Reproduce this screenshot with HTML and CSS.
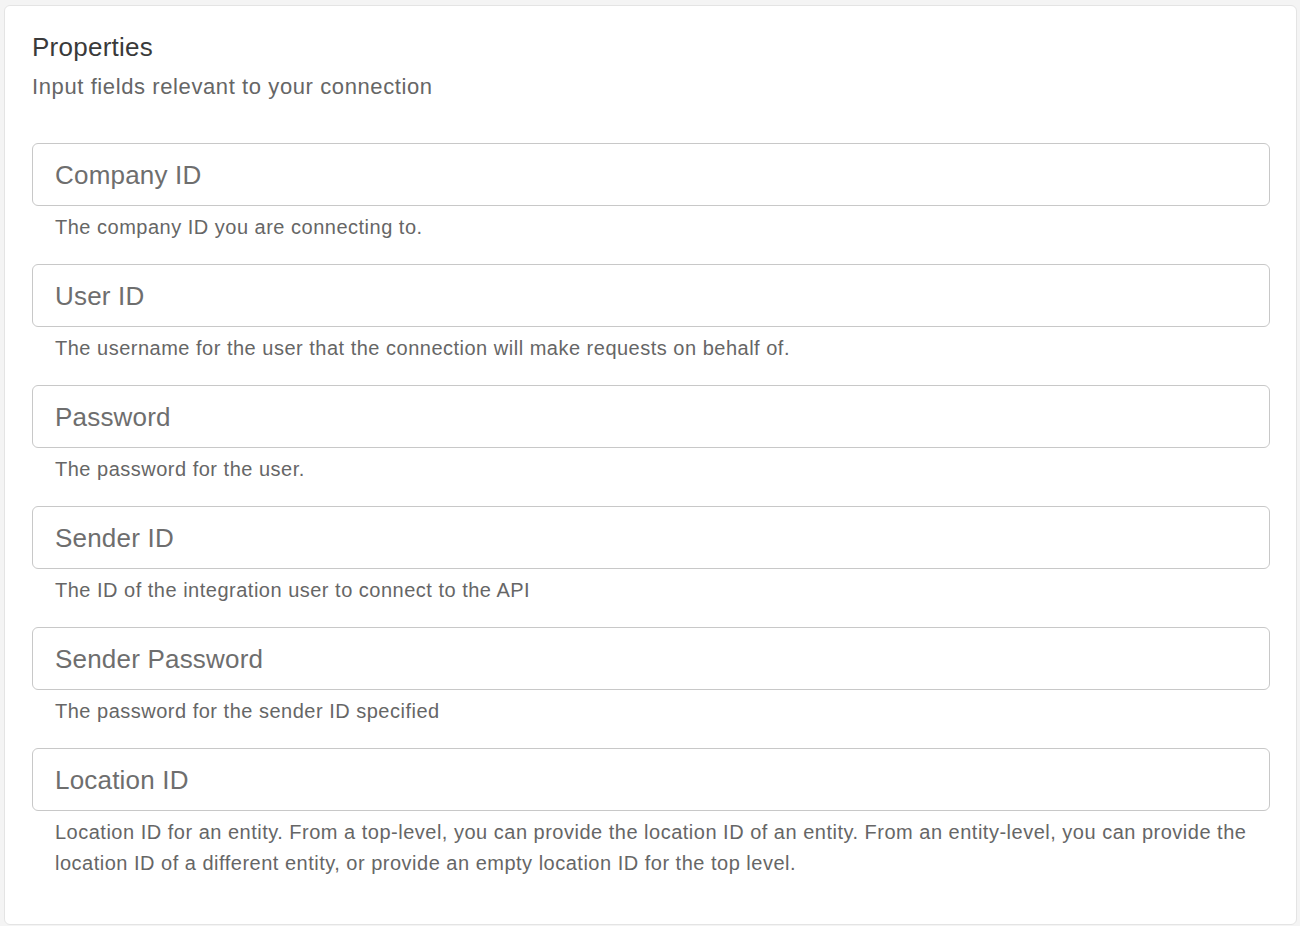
FILE: index.html
```html
<!DOCTYPE html>
<html lang="en">
<head>
  <meta charset="UTF-8">
  <meta name="viewport" content="width=device-width, initial-scale=1.0">
  <title>Connection properties</title>
  <link rel="stylesheet" href="styles.css">
</head>
<body>
  <div class="card">
    <div class="card-title">Properties</div>
    <div class="card-subtitle">Input fields relevant to your connection</div>

    <div class="fields">
      <div class="field">
        <input type="text" class="field-input" placeholder="Company ID">
        <div class="field-help">The company ID you are connecting to.</div>
      </div>
      <div class="field">
        <input type="text" class="field-input" placeholder="User ID">
        <div class="field-help">The username for the user that the connection will make requests on behalf of.</div>
      </div>
      <div class="field">
        <input type="password" class="field-input" placeholder="Password">
        <div class="field-help">The password for the user.</div>
      </div>
      <div class="field">
        <input type="text" class="field-input" placeholder="Sender ID">
        <div class="field-help">The ID of the integration user to connect to the API</div>
      </div>
      <div class="field">
        <input type="password" class="field-input" placeholder="Sender Password">
        <div class="field-help">The password for the sender ID specified</div>
      </div>
      <div class="field">
        <input type="text" class="field-input" placeholder="Location ID">
        <div class="field-help">Location ID for an entity. From a top-level, you can provide the location ID of an entity. From an entity-level, you can provide the location ID of a different entity, or provide an empty location ID for the top level.</div>
      </div>
    </div>
  </div>
</body>
</html>
```

FILE: styles.css
```css
body {
  font-family: "Liberation Sans", Arial, sans-serif;
  margin: 0;
  padding: 0;
  background-color: #f4f4f4;
}

.card {
  margin: 5px 3px 1px 4px;
  background-color: #fff;
  border: 1px solid #e4e4e4;
  border-radius: 6px;
  padding: 26px 26px 45px 27px;
}

.card-title {
  font-size: 26px;
  line-height: 30px;
  letter-spacing: 0.25px;
  color: #3a3a3a;
}

.card-subtitle {
  margin-top: 10px;
  font-size: 22px;
  line-height: 30px;
  letter-spacing: 0.6px;
  color: #666;
}

.fields {
  margin-top: 41px;
  display: flex;
  flex-direction: column;
  gap: 21px;
}

.field-input {
  display: block;
  width: 100%;
  height: 63px;
  box-sizing: border-box;
  padding: 2px 22px 0;
  border: 1px solid #c8c8c8;
  border-radius: 6px;
  font-family: inherit;
  font-size: 26px;
  letter-spacing: 0.2px;
  color: #333;
  outline: none;
}

.field-input::placeholder {
  color: #6e6e6e;
}

.field-help {
  margin-top: 6px;
  padding: 0 23px;
  font-size: 20px;
  line-height: 31px;
  letter-spacing: 0.5px;
  color: #666;
}
```
